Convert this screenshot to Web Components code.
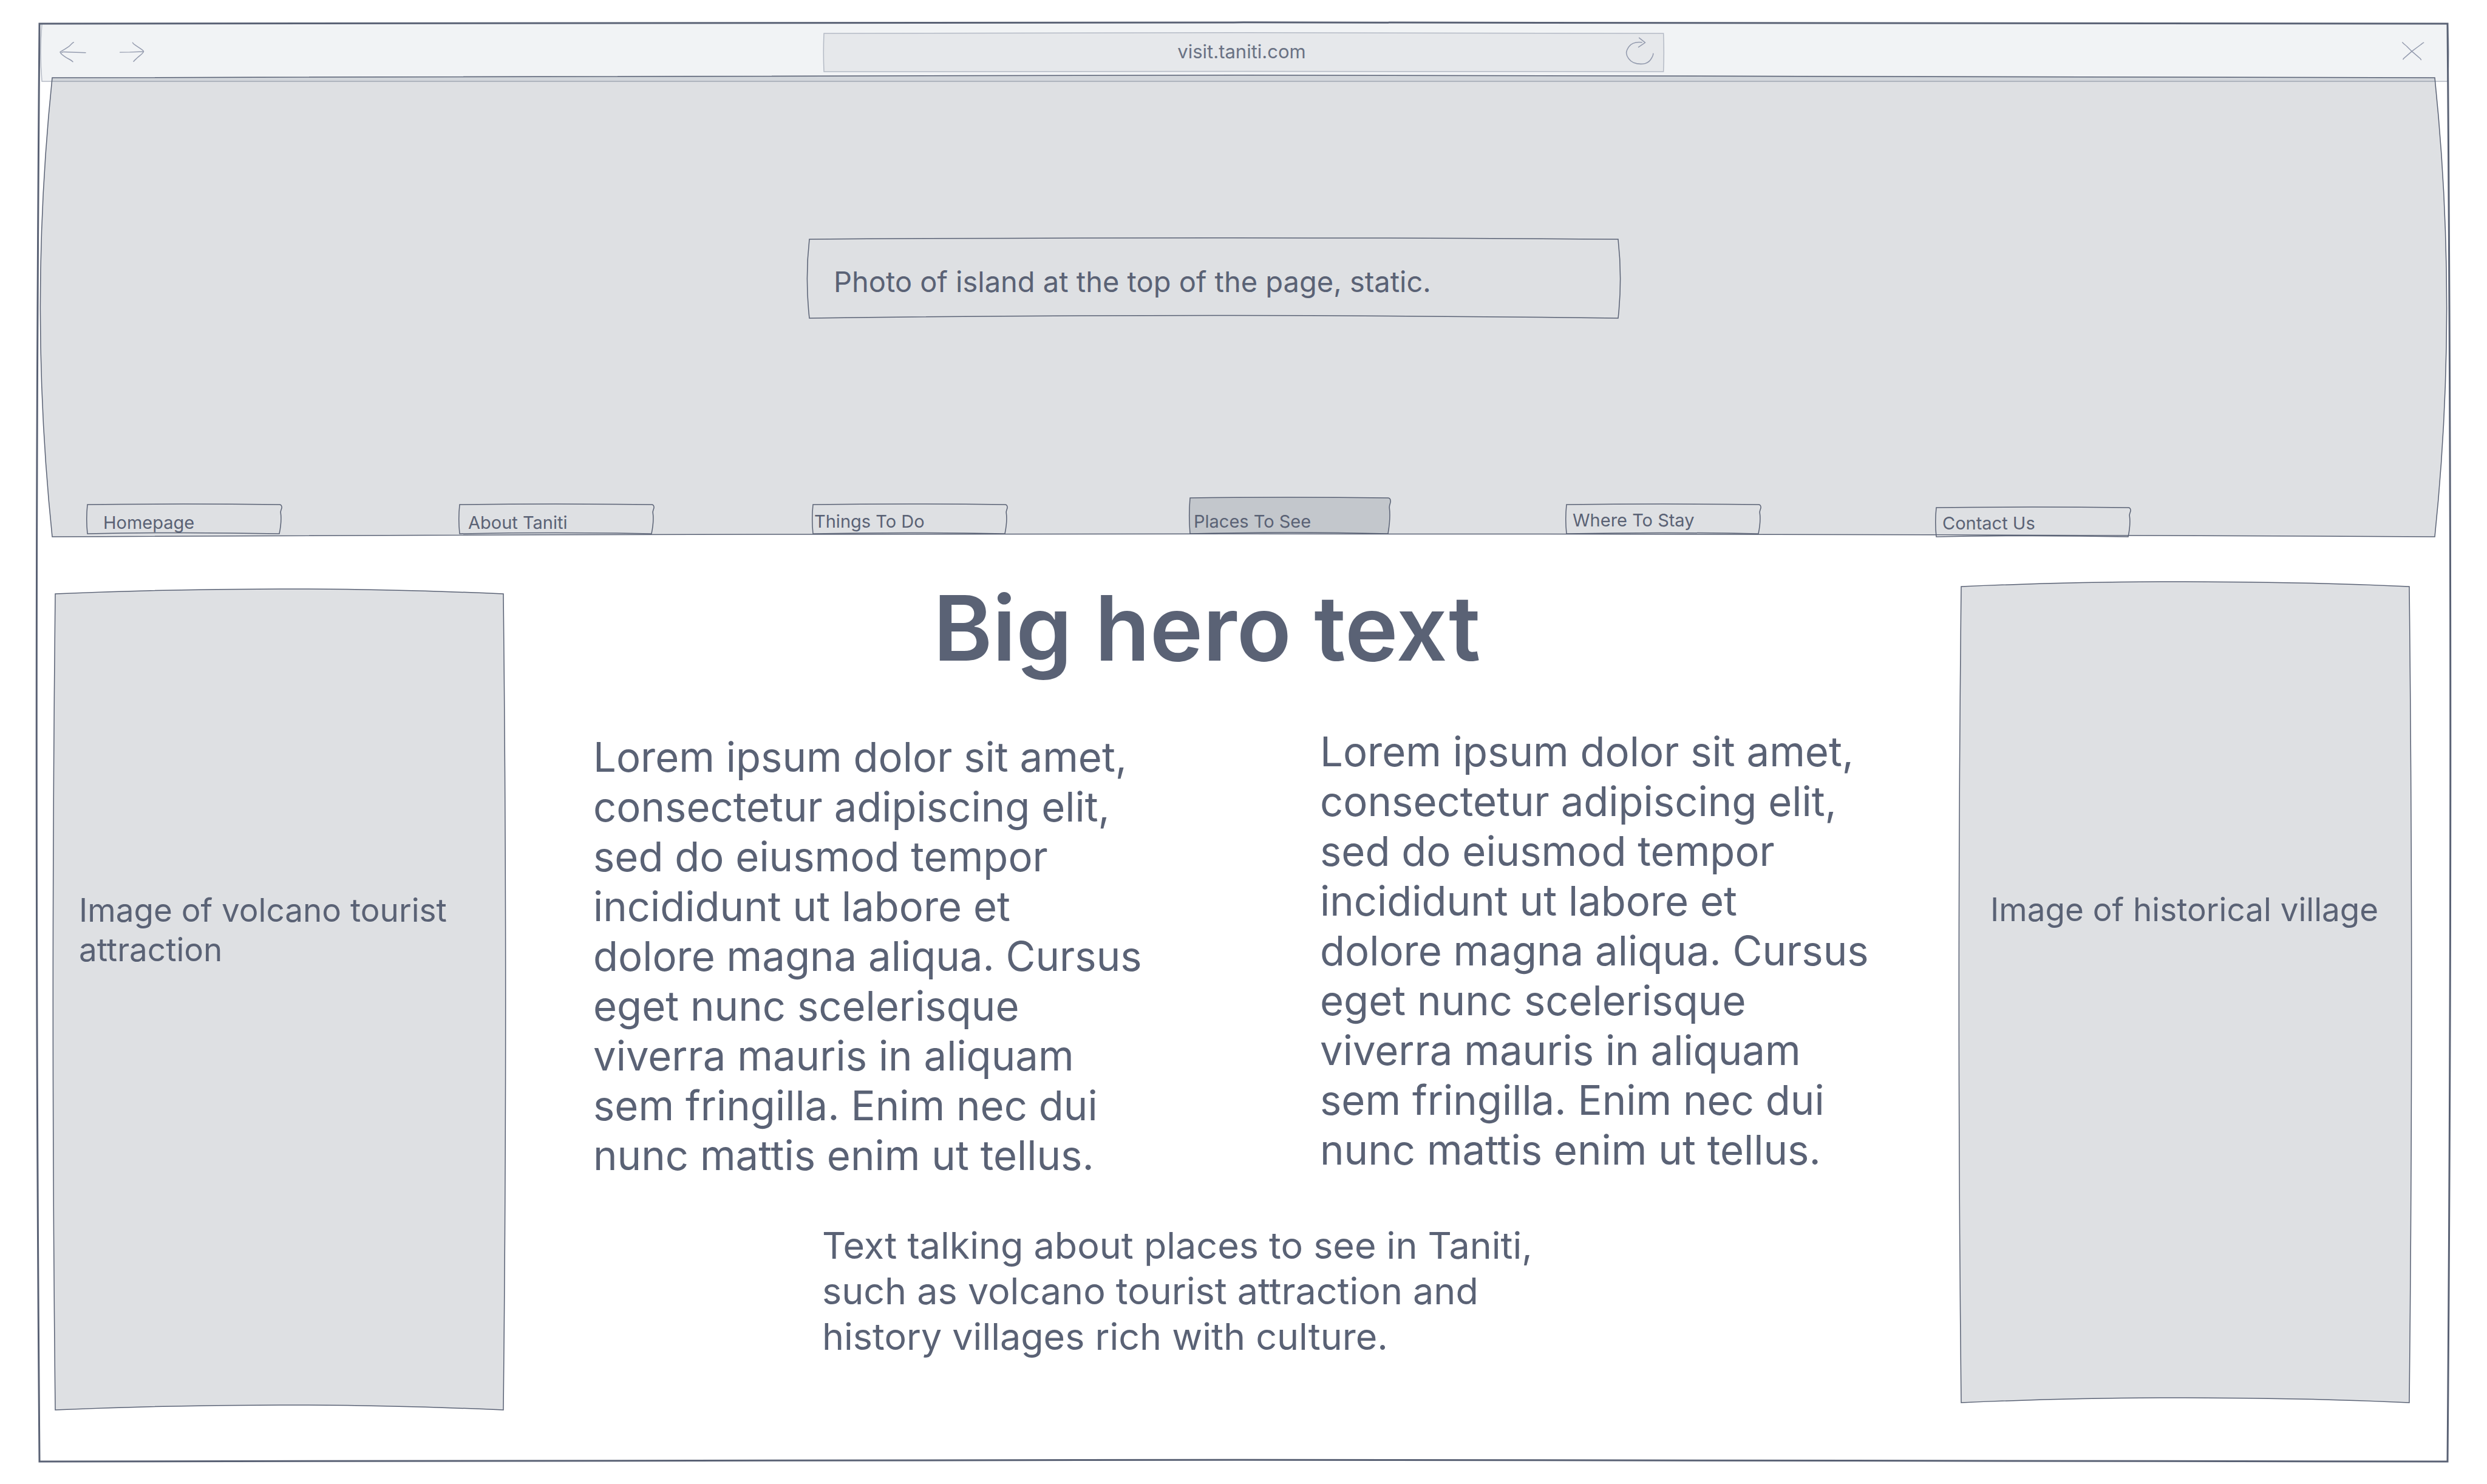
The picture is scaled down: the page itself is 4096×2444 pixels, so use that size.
<!DOCTYPE html>
<html lang="en">
<head>
<meta charset="utf-8">
<title>Visit Taniti – Places To See</title>
<style>
  :root {
    --ink: #5a6275;
    --ink-soft: #949bae;
    --rule-soft: #b4bac5;
    --tint: rgba(90, 98, 117, .2);
  }
  body {
    margin: 0;
    background: #fff;
    color: var(--ink);
    font-family: Inter, "Liberation Sans", sans-serif;
  }
</style>
</head>
<body>

<browser-window>
  <browser-bar slot="bar" address="visit.taniti.com"></browser-bar>

  <hero-banner>
    <hero-caption>Photo of island at the top of the page, static.</hero-caption>
    <site-nav slot="nav">
      <nav-tab href="#home" style="--indent:26px">Homepage</nav-tab>
      <nav-tab href="#about" style="--indent:14px">About Taniti</nav-tab>
      <nav-tab href="#do" style="--indent:2px;--lift:2px">Things To Do</nav-tab>
      <nav-tab href="#see" style="--indent:6px;--lift:2px" current>Places To See</nav-tab>
      <nav-tab href="#stay" style="--indent:10px;--lift:4px">Where To Stay</nav-tab>
      <nav-tab href="#contact" style="--indent:10px;--lift:4px" low>Contact Us</nav-tab>
    </site-nav>
  </hero-banner>

  <page-columns>
    <image-card slot="left" style="--drop:33px;--text-top:489px;--text-left:39px">Image of volcano tourist attraction</image-card>
    <article-body>
      <span slot="title">Big hero text</span>
      <span slot="first">Lorem ipsum dolor sit amet,<br>consectetur adipiscing elit,<br>sed do eiusmod tempor<br>incididunt ut labore et<br>dolore magna aliqua. Cursus<br>eget nunc scelerisque<br>viverra mauris in aliquam<br>sem fringilla. Enim nec dui<br>nunc mattis enim ut tellus.</span>
      <span slot="second">Lorem ipsum dolor sit amet,<br>consectetur adipiscing elit,<br>sed do eiusmod tempor<br>incididunt ut labore et<br>dolore magna aliqua. Cursus<br>eget nunc scelerisque<br>viverra mauris in aliquam<br>sem fringilla. Enim nec dui<br>nunc mattis enim ut tellus.</span>
      <span slot="note">Text talking about places to see in Taniti,<br>such as volcano tourist attraction and<br>history villages rich with culture.</span>
    </article-body>
    <image-card slot="right" style="--drop:21px;--text-top:500px;--text-left:48px">Image of historical village</image-card>
  </page-columns>
</browser-window>

<script>
  const define = (name, html, setup) => {
    const template = document.createElement('template');
    template.innerHTML = html;
    customElements.define(name, class extends HTMLElement {
      constructor() {
        super();
        this.attachShadow({ mode: 'open' }).append(template.content.cloneNode(true));
      }
      connectedCallback() {
        if (setup) setup(this, this.shadowRoot);
      }
    });
  };

  // Hand-drawn outline that fills its parent. The bows are percentages of the box.
  define('sketch-outline', `
    <style>
      :host { position: absolute; inset: 0; display: block; pointer-events: none; }
      svg { display: block; width: 100%; height: 100%; overflow: visible; }
      path {
        fill: var(--outline-fill, none);
        stroke: var(--outline-color, var(--ink));
        stroke-width: var(--outline-width, 1.5px);
        vector-effect: non-scaling-stroke;
      }
    </style>
    <svg viewBox="0 0 100 100" preserveAspectRatio="none" aria-hidden="true"><path/></svg>
  `, (host, root) => {
    const n = key => 2 * Number(host.getAttribute(key) || 0);
    const right = host.hasAttribute('wobble')
      ? 'C100.9 0 101.3 4.6 101.3 10.2 C101.1 18 100.65 19.4 100.7 27.3 C101.06 43.5 101.1 64.4 100 100'
      : `Q${100 + n('side')} 50 100 100`;
    root.querySelector('path').setAttribute('d',
      `M0 0 Q50 ${-n('top')} 100 0 ${right} Q50 ${100 - n('bottom')} 0 100 Q${-n('side')} 50 0 0Z`);
  });

  define('browser-window', `
    <style>
      :host { display: flex; flex-direction: column; position: relative; margin: 39px 65px 37px; }
      .frame { --outline-width: 3px; }
    </style>
    <slot name="bar"></slot>
    <slot></slot>
    <sketch-outline class="frame" top=".09" bottom=".12" side=".12"></sketch-outline>
  `);

  define('browser-bar', `
    <style>
      :host {
        display: grid; grid-template-columns: 1260fr 1383fr 1260fr; align-items: center;
        position: relative; margin-left: 4px; padding: 16px 32px 16px 28px;
      }
      .back { --outline-fill: #f1f3f5; --outline-color: var(--rule-soft); }
      button { position: relative; display: block; margin: 0; padding: 0; border: 0; background: none; cursor: pointer; }
      button svg { display: block; fill: none; stroke: var(--ink-soft); stroke-linecap: round; stroke-linejoin: round; }
      .history { display: flex; gap: 50px; }
      .address { position: relative; display: grid; align-items: center; }
      .field { --outline-fill: #e6e8eb; --outline-color: var(--rule-soft); }
      input {
        grid-area: 1 / 1; position: relative; width: 100%; height: 63px; box-sizing: border-box;
        margin: 0; padding: 0 6px 4px 0; border: 0; outline: 0; background: none;
        font: 400 31px/36px Inter, "Liberation Sans", sans-serif; text-align: center; color: #6a7284;
      }
      .reload { grid-area: 1 / 1; justify-self: end; margin-right: 14px; }
      .close { justify-self: end; }
    </style>
    <sketch-outline class="back" top="2" bottom="0" side=".05"></sketch-outline>
    <div class="history">
      <button type="button" aria-label="Back">
        <svg width="48" height="40" viewBox="144 98 72 60" stroke-width="2.2"><path d="M180.500 102 C176 104 174 108 168.500 112.500 C160 118.500 152 123 147 126 C148 131 155 135 161 139 C168 143.500 175 146 178.500 150 M150.600 127.700 Q152 125.600 156 125.800 L186 126.900 L210 127.500"/></svg>
      </button>
      <button type="button" aria-label="Forward">
        <svg width="48" height="40" viewBox="290 98 72 60" stroke-width="2.2"><path d="M325.200 102.700 C326 106 330 107.500 334 110.500 C341 115.500 350 120 352.400 124.300 C352 129 343 134.500 338 139 C334 143 330 146 327.500 149.300 M294 126.700 L318 126.300 L351 125"/></svg>
      </button>
    </div>
    <div class="address">
      <sketch-outline class="field" top="2" bottom=".8" side=".05"></sketch-outline>
      <input type="text" aria-label="Address">
      <button class="reload" type="button" aria-label="Reload">
        <svg width="48" height="52" viewBox="72 90 214 232" stroke-width="7"><path d="M193 129 C160 125 120 130 98 160 C84 180 79 192 79 207 C80 235 105 265 130 277 C160 289 190 291 218 284 C240 276 255 264 262 248 C270 235 277 225 276 212 M173 96 L217 131 L168 164"/></svg>
      </button>
    </div>
    <button class="close" type="button" aria-label="Close">
      <svg width="48" height="40" viewBox="5881 98 72 60" stroke-width="2.2"><path d="M5889.700 102.300 C5892 106 5897 108.500 5901 112.500 L5913 124.500 L5930 139 C5933 141 5935 143 5935.700 145.300 M5942 103 C5939.500 103.500 5937 106.500 5934 108.500 L5913 124 L5899 136.500 C5896 139 5892.500 141 5891.300 144"/></svg>
    </button>
  `, (host, root) => {
    root.querySelector('input').value = host.getAttribute('address');
  });

  define('hero-banner', `
    <style>
      :host {
        display: flex; flex-direction: column; gap: 296px; position: relative;
        margin: -6px 21px 0; padding-top: 266px;
      }
      .photo { --outline-fill: var(--tint); }
    </style>
    <sketch-outline class="photo" top=".57" bottom=".62" side=".5"></sketch-outline>
    <slot></slot>
    <slot name="nav"></slot>
  `);

  define('hero-caption', `
    <style>
      :host {
        display: block; position: relative; box-sizing: border-box;
        width: 1332px; max-width: 100%; margin-left: 1247px; padding: 42px 40px 32px;
        font-size: 47px; line-height: 56px;
      }
    </style>
    <sketch-outline top="1.8" bottom="3.4" side=".27"></sketch-outline>
    <slot></slot>
  `);

  define('site-nav', `
    <style>
      :host { display: block; position: relative; }
      nav {
        display: grid; grid-template-columns: 613fr 582fr 621fr 620fr 609fr 317fr;
        align-items: end; padding: 0 504px 0 58px;
      }
    </style>
    <nav aria-label="Site"><slot></slot></nav>
  `);

  define('nav-tab', `
    <style>
      :host { display: block; margin-bottom: 5px; }
      :host([low]) { margin-bottom: 0; }
      a {
        display: flex; align-items: flex-end; position: relative; box-sizing: border-box;
        width: 316px; height: 48px; padding: 0 0 var(--lift, 0) var(--indent);
        font-size: 29px; line-height: 36px; color: inherit; text-decoration: none; white-space: nowrap;
      }
      :host([current]) a { width: 326px; height: 59px; --outline-fill: var(--tint); }
      span { position: relative; }
    </style>
    <a>
      <sketch-outline top="1.9" bottom="3.3" side=".4" wobble></sketch-outline>
      <span><slot></slot></span>
    </a>
  `, (host, root) => {
    const link = root.querySelector('a');
    link.href = host.getAttribute('href');
    if (host.hasAttribute('current')) link.setAttribute('aria-current', 'page');
  });

  define('page-columns', `
    <style>
      :host {
        display: grid; align-items: start;
        grid-template-columns: minmax(0, 738fr) minmax(0, 2401fr) minmax(0, 738fr);
        padding: 61px 63px 85px 26px;
      }
    </style>
    <slot name="left"></slot>
    <slot></slot>
    <slot name="right"></slot>
  `);

  define('image-card', `
    <style>
      :host {
        display: block; position: relative; box-sizing: border-box; aspect-ratio: 738 / 1344;
        margin-top: var(--drop); padding: var(--text-top) 40px 0 var(--text-left);
        font-size: 53px; line-height: 65px;
      }
      sketch-outline { --outline-fill: var(--tint); }
      div { position: relative; }
    </style>
    <sketch-outline top=".6" bottom=".6" side=".5"></sketch-outline>
    <div><slot></slot></div>
  `);

  define('article-body', `
    <style>
      :host { display: block; padding: 0 156px 0 148px; }
      h1 { margin: 0 0 72px 560px; font-size: 148px; line-height: 180px; font-weight: 600; }
      p { margin: 0; }
      .pair {
        display: grid; grid-template-columns: repeat(2, minmax(0, 1fr)); gap: 297px;
        font-size: 67px; line-height: 82px; white-space: nowrap;
      }
      .pair p:first-child { padding-top: 9px; }
      .note { margin: 70px 0 0 377px; font-size: 61px; line-height: 75px; }
    </style>
    <h1><slot name="title"></slot></h1>
    <div class="pair">
      <p><slot name="first"></slot></p>
      <p><slot name="second"></slot></p>
    </div>
    <p class="note"><slot name="note"></slot></p>
  `);
</script>
</body>
</html>
